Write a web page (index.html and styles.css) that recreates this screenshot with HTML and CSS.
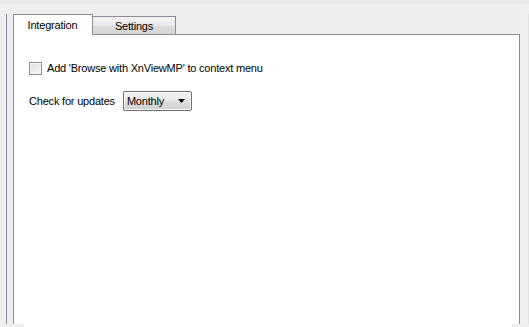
FILE: index.html
```html
<!DOCTYPE html>
<html>
<head>
<meta charset="utf-8">
<link rel="stylesheet" href="styles.css">
</head>
<body>
<div class="topstrip"></div>
<div class="window">
  <div class="leftline"></div>
  <div class="tabwidget">
    <div class="tabbar">
      <div class="tab active">Integration</div>
      <div class="tab">Settings</div>
    </div>
    <div class="panel">
      <label class="row check-row">
        <span class="checkbox"></span>
        <span>Add 'Browse with XnViewMP' to context menu</span>
      </label>
      <div class="row combo-row">
        <span>Check for updates</span>
        <span class="combo">
          <span class="combo-text">Monthly</span>
          <svg class="arrow" width="7" height="4" viewBox="0 0 7 4"><path d="M0 0H7L3.5 4Z" fill="#000"/></svg>
        </span>
      </div>
    </div>
  </div>
  <div class="rightstrip"></div>
</div>
<div class="footer">
  <div class="foot-left"></div>
  <div class="foot-mid"></div>
  <div class="foot-right"></div>
</div>
</body>
</html>
```
FILE: styles.css
```css
html, body {
  margin: 0;
  padding: 0;
}
body {
  width: 529px;
  height: 327px;
  overflow: hidden;
  background: #eeeeee;
  font-family: "Liberation Sans", Arial, sans-serif;
  font-size: 11px;
  letter-spacing: -0.2px;
  color: #000;
}
.topstrip {
  height: 4px;
  background: #e8e8e8;
}
.window {
  display: flex;
  height: 320px;
  padding-top: 10px;
  box-sizing: border-box;
}
.leftline {
  width: 1px;
  margin-left: 6px;
  background: #8a8c96;
}
.tabwidget {
  margin-left: 6px;
  width: 507px;
  display: flex;
  flex-direction: column;
}
.tabbar {
  display: flex;
  align-items: flex-end;
  height: 20px;
}
.tab {
  box-sizing: border-box;
  border: 1px solid #8b8d96;
  border-bottom: none;
  display: flex;
  align-items: center;
  justify-content: center;
}
.tab.active {
  width: 80px;
  height: 21px;
  margin-bottom: -1px;
  background: #ffffff;
  position: relative;
  z-index: 1;
  padding-bottom: 1px;
  padding-right: 1px;
}
.tab:not(.active) {
  width: 84px;
  height: 18px;
  margin-left: -1px;
  background: linear-gradient(#f3f3f3, #ebebeb 45%, #dcdcdc 55%, #d4d4d4);
  padding-top: 1px;
}
.panel {
  flex: 1;
  background: #ffffff;
  border: 1px solid #8b8d96;
  border-bottom: none;
  padding: 26px 0 0 15px;
  box-sizing: border-box;
}
.row {
  display: flex;
  align-items: center;
}
.check-row {
  gap: 5px;
  height: 14px;
}
.checkbox {
  width: 11px;
  height: 11px;
  border: 1px solid #8f8f8f;
  background: linear-gradient(135deg, #dcdcdc, #f6f6f6);
  box-shadow: inset 0 0 0 1px #f4f4f4;
}
.combo-row {
  margin-top: 16px;
  gap: 8px;
}
.combo {
  box-sizing: border-box;
  width: 69px;
  height: 20px;
  border: 1px solid #707070;
  border-radius: 2px;
  background: linear-gradient(#f2f2f2, #ebebeb 45%, #dddddd 55%, #cfcfcf);
  box-shadow: inset 0 0 0 1px #fafafa;
  display: flex;
  align-items: center;
  padding-left: 3px;
}
.combo-text {
  flex: 1;
}
.arrow {
  margin-right: 6px;
}
.rightstrip {
  flex: 1;
  background: linear-gradient(90deg, #f0f0f0 85%, #e2e2e2 85%);
}
.footer {
  display: flex;
  height: 3px;
}
.foot-left {
  width: 24px;
  background: #eeeeee;
}
.foot-mid {
  width: 488px;
  background: #ffffff;
}
.foot-right {
  flex: 1;
  background: #eeeeee;
}
```
